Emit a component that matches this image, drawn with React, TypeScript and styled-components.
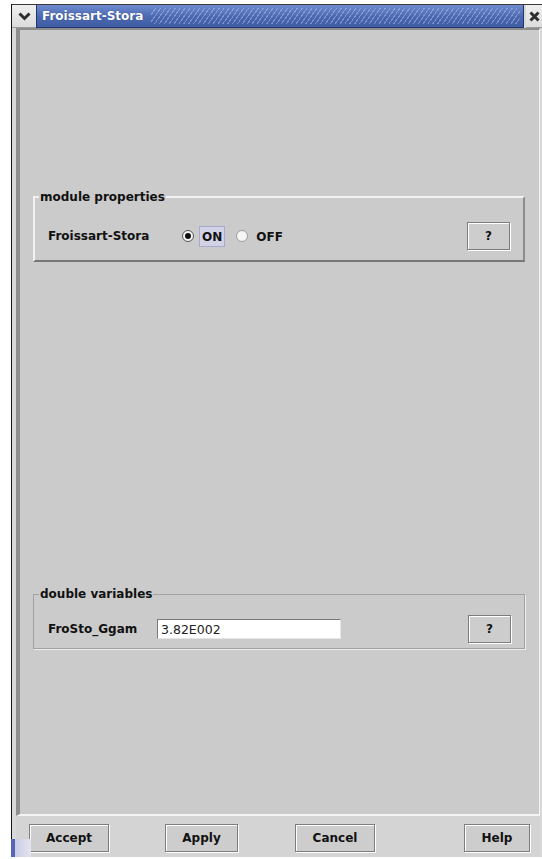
import React from 'react'
import styled, { createGlobalStyle } from 'styled-components'

const GlobalStyle = createGlobalStyle`
  html, body {
    margin: 0;
    padding: 0;
    background: #ffffff;
    overflow: hidden;
  }
  body {
    font-family: "DejaVu Sans", "Liberation Sans", sans-serif;
  }
`

const Window = styled.div`
  position: relative;
  margin: 4px 0 0 11px;
  width: 531px;
  height: 853px;
  display: flex;
  flex-direction: column;
  background: #d8d8d8;
  border-left: 1px solid #161616;
  box-sizing: border-box;
`

const TitleBar = styled.div`
  display: flex;
  height: 24px;
  border-top: 1px solid #3a3a3a;
  box-sizing: border-box;
`

const FrameButton = styled.div<{ $width: number }>`
  width: ${p => p.$width}px;
  flex: none;
  display: flex;
  align-items: center;
  justify-content: center;
  background: linear-gradient(#efefef, #dcdcdc);
  border-bottom: 1px solid #9a9a9a;
  box-sizing: border-box;
`

const TitleStrip = styled.div`
  flex: 1;
  display: flex;
  align-items: center;
  margin-right: 2px;
  padding-left: 5px;
  background: linear-gradient(#6f8cd0, #4a68b0 55%, #3f5ca4);
  border: 1px solid #23356a;
  border-top: none;
  color: #ffffff;
  font-size: 12px;
  font-weight: bold;
  text-shadow: 0 0 1px #2a3c78;
`

const Hatch = styled.div`
  flex: 1;
  align-self: stretch;
  margin: 3px 3px 3px 8px;
  background: repeating-linear-gradient(
    -55deg,
    rgba(255, 255, 255, 0) 0px,
    rgba(255, 255, 255, 0) 3px,
    rgba(190, 205, 240, 0.45) 3px,
    rgba(190, 205, 240, 0.45) 4px
  );
`

const Frame = styled.div`
  flex: 1;
  display: flex;
  flex-direction: column;
  padding: 0 2px 0 4px;
  min-height: 0;
`

const Panel = styled.div`
  flex: 1;
  display: grid;
  grid-template-rows: 1fr 1fr;
  align-items: center;
  background: #cbcbcb;
  border-style: solid;
  border-width: 2px 1px 2px 4px;
  border-color: #8c8c8c #f4f4f4 #f4f4f4 #8f8f8f;
`

const Group = styled.fieldset<{ $raised?: boolean }>`
  margin: 0 14px 0 13px;
  padding: 0;
  min-width: 0;
  border-style: solid;
  ${p =>
    p.$raised
      ? `
    border-width: 2px;
    border-color: #f2f2f2 #8c8c8c #777777 #f2f2f2;
  `
      : `
    border-width: 1px;
    border-color: #a2a2a2;
    box-shadow: 1px 1px 0 #ececec;
  `}
`

const Legend = styled.legend<{ $offset: number }>`
  margin-left: ${p => p.$offset}px;
  padding: 0 1px;
  font-size: 12px;
  font-weight: bold;
  line-height: 14px;
  color: #111111;
`

const Row = styled.div<{ $top: number; $bottom: number; $left: number }>`
  display: flex;
  align-items: center;
  padding: ${p => p.$top}px 13px ${p => p.$bottom}px ${p => p.$left}px;
`

const Label = styled.span<{ $width: number }>`
  width: ${p => p.$width}px;
  flex: none;
  font-size: 12px;
  font-weight: bold;
  color: #111111;
`

const RadioItem = styled.label<{ $gap?: number }>`
  display: flex;
  align-items: center;
  gap: 5px;
  margin-left: ${p => p.$gap ?? 0}px;
  font-size: 12px;
  font-weight: bold;
  color: #111111;
`

const RadioDot = styled.span<{ $checked?: boolean }>`
  width: 12px;
  height: 12px;
  border-radius: 50%;
  box-sizing: border-box;
  display: flex;
  align-items: center;
  justify-content: center;
  background: #f6f6f6;
  border: 1px solid ${p => (p.$checked ? '#555555' : '#9c9c9c')};

  &::after {
    content: '';
    display: ${p => (p.$checked ? 'block' : 'none')};
    width: 6px;
    height: 6px;
    border-radius: 50%;
    background: #111111;
  }
`

const RadioText = styled.span<{ $focus?: boolean }>`
  padding: 3px 2px 2px;
  border: 1px solid ${p => (p.$focus ? '#a9a9cf' : 'transparent')};
  background: ${p => (p.$focus ? '#d2d2e6' : 'transparent')};
`

const TextField = styled.div`
  width: 184px;
  height: 20px;
  box-sizing: border-box;
  padding: 2px 3px;
  background: #ffffff;
  border-style: solid;
  border-width: 1px;
  border-color: #7a7a7a #e6e6e6 #e6e6e6 #7a7a7a;
  font-size: 12.5px;
  line-height: 15px;
  color: #222222;
`

const Button = styled.button<{ $width: number; $gap?: number; $auto?: boolean }>`
  width: ${p => p.$width}px;
  height: 28px;
  flex: none;
  margin-left: ${p => (p.$auto ? 'auto' : `${p.$gap ?? 0}px`)};
  padding: 0;
  background: #cdcdcd;
  border: 1px solid #7d7d7d;
  box-shadow: inset 1px 1px 0 #ffffff, 1px 1px 0 #ffffff;
  font-family: "DejaVu Sans", "Liberation Sans", sans-serif;
  font-size: 12px;
  font-weight: bold;
  color: #111111;
`

const ButtonBar = styled.div`
  height: 41px;
  flex: none;
  display: flex;
  align-items: flex-start;
  padding: 8px 10px 0 13px;
  box-sizing: border-box;
  background: #d4d4d4;
`

const CornerGrip = styled.div`
  position: absolute;
  left: -1px;
  bottom: -2px;
  width: 20px;
  height: 18px;
  background: linear-gradient(to right, #5566b4 0 4px, #c9cce6 4px, #e4e4ee);
  border-bottom: 2px solid #4f61b0;
`

function Chevron() {
  return (
    <svg width="13" height="9" viewBox="0 0 13 9">
      <polyline points="1.5,1.5 6.5,6.5 11.5,1.5" fill="none" stroke="#2e2e2e" strokeWidth="3" />
    </svg>
  )
}

function CloseMark() {
  return (
    <svg width="11" height="11" viewBox="0 0 11 11">
      <path d="M1.5 1.5 L9.5 9.5 M9.5 1.5 L1.5 9.5" stroke="#2e2e2e" strokeWidth="3" />
    </svg>
  )
}

export default function App() {
  return (
    <>
      <GlobalStyle />
      <Window>
        <TitleBar>
          <FrameButton $width={24}>
            <Chevron />
          </FrameButton>
          <TitleStrip>
            Froissart-Stora
            <Hatch />
          </TitleStrip>
          <FrameButton $width={16}>
            <CloseMark />
          </FrameButton>
        </TitleBar>

        <Frame>
          <Panel>
            <Group $raised>
              <Legend $offset={4}>module properties</Legend>
              <Row $top={18} $bottom={10} $left={13}>
                <Label $width={134}>Froissart-Stora</Label>
                <RadioItem>
                  <RadioDot $checked />
                  <RadioText $focus>ON</RadioText>
                </RadioItem>
                <RadioItem $gap={11}>
                  <RadioDot />
                  <RadioText>OFF</RadioText>
                </RadioItem>
                <Button $width={43} $auto>?</Button>
              </Row>
            </Group>

            <Group>
              <Legend $offset={5}>double variables</Legend>
              <Row $top={14} $bottom={5} $left={14}>
                <Label $width={109}>FroSto_Ggam</Label>
                <TextField>3.82E002</TextField>
                <Button $width={43} $auto>?</Button>
              </Row>
            </Group>
          </Panel>

          <ButtonBar>
            <Button $width={80}>Accept</Button>
            <Button $width={73} $gap={56}>Apply</Button>
            <Button $width={80} $gap={57}>Cancel</Button>
            <Button $width={66} $auto>Help</Button>
          </ButtonBar>
        </Frame>
        <CornerGrip />
      </Window>
    </>
  )
}
